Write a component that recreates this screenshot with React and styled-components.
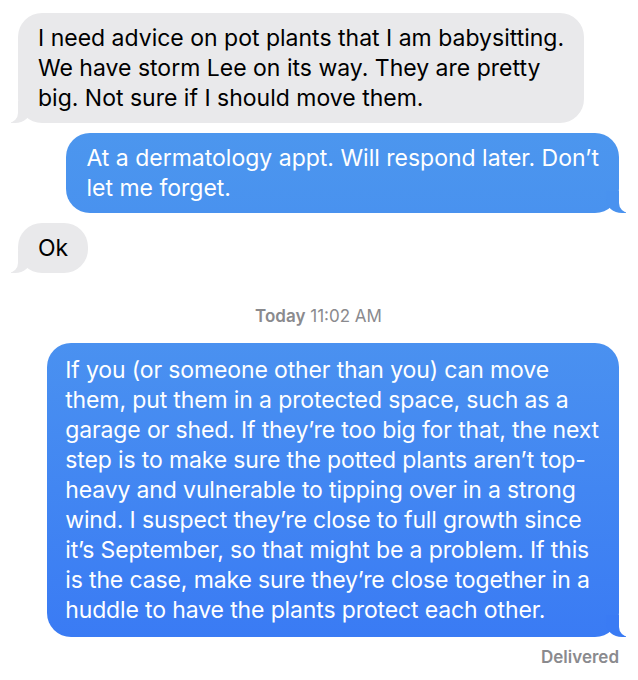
import React from 'react';
import styled, { createGlobalStyle, css } from 'styled-components';

const GlobalStyle = createGlobalStyle`
    html, body {
        margin: 0;
        padding: 0;
        background: #fff;
    }
    body {
        font-family: Inter, "Noto Sans", "Liberation Sans", sans-serif;
        -webkit-font-smoothing: antialiased;
    }
`;

const Thread = styled.div`
    display: flex;
    flex-direction: column;
    padding: 13px 19px 0 18px;
`;

const GRAY = '#e9e9eb';

// tail colours follow the bottom of each bubble
const tailRight = (color) => css`
    &::before {
        content: "";
        position: absolute;
        bottom: 0;
        right: -7px;
        width: 20px;
        height: 22px;
        background: ${color};
        border-bottom-left-radius: 16px 14px;
    }
    &::after {
        content: "";
        position: absolute;
        bottom: 0;
        right: -26px;
        width: 26px;
        height: 22px;
        background: #fff;
        border-bottom-left-radius: 10px;
    }
`;

const tailLeft = css`
    &::before {
        content: "";
        position: absolute;
        bottom: 0;
        left: -7px;
        width: 20px;
        height: 22px;
        background: ${GRAY};
        border-bottom-right-radius: 16px 14px;
    }
    &::after {
        content: "";
        position: absolute;
        bottom: 0;
        left: -26px;
        width: 26px;
        height: 22px;
        background: #fff;
        border-bottom-right-radius: 10px;
    }
`;

const Bubble = styled.div`
    position: relative;
    box-sizing: border-box;
    align-self: ${(p) => (p.$me ? 'flex-end' : 'flex-start')};
    margin-top: ${(p) => p.$gap || 0}px;
    padding: ${(p) => (p.$big ? '12px 20px 12px 18px' : '10px 20px')};
    border-radius: 24px;
    font-size: 23px;
    line-height: 30px;
    letter-spacing: ${(p) => (p.$big ? '-0.13px' : '0')};
    white-space: nowrap;
    color: ${(p) => (p.$me ? '#fff' : '#000')};
    background: ${(p) => (p.$me ? `linear-gradient(180deg, ${p.$top}, ${p.$bottom})` : GRAY)};
    ${(p) => (p.$me ? tailRight(p.$bottom) : tailLeft)}
`;

const Line = styled.span`
    display: block;
`;

const Stamp = styled.div`
    margin-top: 33px;
    text-align: center;
    font-size: 17px;
    line-height: 20px;
    color: #8a8a8e;

    & b {
        font-weight: 600;
    }
`;

const Status = styled.div`
    align-self: flex-end;
    margin-top: 10px;
    font-size: 17px;
    line-height: 20px;
    font-weight: 600;
    color: #8a8a8e;
`;

const messages = [
    {
        me: false,
        gap: 0,
        lines: [
            'I need advice on pot plants that I am babysitting.',
            'We have storm Lee on its way. They are pretty',
            'big. Not sure if I should move them.',
        ],
    },
    {
        me: true,
        gap: 10,
        top: '#4c96ee',
        bottom: '#4992ef',
        lines: [
            'At a dermatology appt. Will respond later. Don\u2019t',
            'let me forget.',
        ],
    },
    {
        me: false,
        gap: 10,
        lines: ['Ok'],
    },
];

const reply = [
    'If you (or someone other than you) can move',
    'them, put them in a protected space, such as a',
    'garage or shed. If they\u2019re too big for that, the next',
    'step is to make sure the potted plants aren\u2019t top-',
    'heavy and vulnerable to tipping over in a strong',
    'wind. I suspect they\u2019re close to full growth since',
    'it\u2019s September, so that might be a problem. If this',
    'is the case, make sure they\u2019re close together in a',
    'huddle to have the plants protect each other.',
];

function Message({ msg }) {
    return (
        <Bubble $me={msg.me} $gap={msg.gap} $top={msg.top} $bottom={msg.bottom} $big={msg.big}>
            {msg.lines.map((l, i) => <Line key={i}>{l}</Line>)}
        </Bubble>
    );
}

export default function App() {
    return (
        <>
            <GlobalStyle />
            <Thread>
                {messages.map((m, i) => <Message key={i} msg={m} />)}
                <Stamp><b>Today</b> 11:02 AM</Stamp>
                <Message msg={{ me: true, big: true, gap: 17, top: '#4a91f0', bottom: '#3a7bf4', lines: reply }} />
                <Status>Delivered</Status>
            </Thread>
        </>
    );
}
